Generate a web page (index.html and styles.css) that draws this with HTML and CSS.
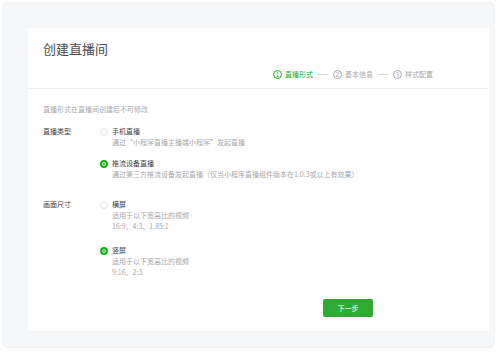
FILE: index.html
```html
<!DOCTYPE html>
<html lang="zh">
<head>
<meta charset="utf-8">
<link rel="stylesheet" href="styles.css">
</head>
<body>
<div class="frame">
  <div class="card">
    <div class="head">
      <div class="title">创建直播间</div>
      <div class="steps">
        <div class="step active"><span class="num">1</span><span>直播形式</span></div>
        <span class="sep"></span>
        <div class="step"><span class="num">2</span><span>基本信息</span></div>
        <span class="sep"></span>
        <div class="step"><span class="num">3</span><span>样式配置</span></div>
      </div>
    </div>
    <div class="body">
      <div class="note">直播形式在直播间创建后不可修改</div>
      <div class="row row-type">
        <div class="label">直播类型</div>
        <div class="options">
          <div class="option">
            <span class="radio"></span>
            <div class="opt-text">
              <div class="opt-title">手机直播</div>
              <div class="opt-desc">通过“小程序直播主播端小程序”发起直播</div>
            </div>
          </div>
          <div class="option">
            <span class="radio checked"></span>
            <div class="opt-text">
              <div class="opt-title">推流设备直播</div>
              <div class="opt-desc">通过第三方推流设备发起直播（仅当小程序直播组件版本在1.0.3或以上有效果）</div>
            </div>
          </div>
        </div>
      </div>
      <div class="row row-size">
        <div class="label">画面尺寸</div>
        <div class="options">
          <div class="option">
            <span class="radio"></span>
            <div class="opt-text">
              <div class="opt-title">横屏</div>
              <div class="opt-desc">适用于以下宽高比的视频</div>
              <div class="opt-desc">16:9、4:3、1.85:1</div>
            </div>
          </div>
          <div class="option option-gap">
            <span class="radio checked"></span>
            <div class="opt-text">
              <div class="opt-title">竖屏</div>
              <div class="opt-desc">适用于以下宽高比的视频</div>
              <div class="opt-desc">9:16、2:3</div>
            </div>
          </div>
        </div>
      </div>
      <div class="actions">
        <button class="btn">下一步</button>
      </div>
    </div>
  </div>
</div>
</body>
</html>
```

FILE: styles.css
```css
html, body {
  margin: 0;
  padding: 0;
  background: #ffffff;
}
body {
  font-family: "Noto Sans CJK SC", "Noto Sans", sans-serif;
  color: #404040;
}
.frame {
  margin: 3px;
  width: 491px;
  height: 344px;
  box-sizing: border-box;
  background: #f6f7f9;
  border-radius: 5px;
  box-shadow: 0 0 2px rgba(0, 0, 0, 0.18);
  padding: 25px 5px 16px 25px;
}
.card {
  background: #ffffff;
  height: 100%;
  display: flex;
  flex-direction: column;
}
.head {
  height: 61px;
  box-sizing: border-box;
  border-bottom: 1px solid #efefef;
  padding: 12px 56px 0 15px;
}
.title {
  font-size: 13px;
  line-height: 18px;
  color: #4a4a4a;
}
.steps {
  margin-top: 11px;
  display: flex;
  justify-content: flex-end;
  align-items: center;
  height: 10px;
  font-size: 7px;
  line-height: 10px;
  color: #a8a8a8;
}
.step {
  display: flex;
  align-items: center;
  gap: 2px;
}
.num {
  width: 7px;
  height: 7px;
  border: 1px solid currentColor;
  border-radius: 50%;
  font-size: 6px;
  line-height: 7px;
  text-align: center;
  margin-right: 1px;
}
.step.active {
  color: #1aad19;
}
.sep {
  width: 10px;
  height: 1px;
  background: #d8d8d8;
  margin: 0 5px;
}
.body {
  padding: 15px 0 0 15px;
  font-size: 7px;
  line-height: 11px;
}
.note {
  line-height: 10px;
  color: #a8a8a8;
}
.row {
  display: flex;
}
.row-type {
  margin-top: 12px;
}
.row-size {
  margin-top: 19px;
}
.label {
  width: 57px;
  flex: none;
  color: #444444;
}
.options {
  display: flex;
  flex-direction: column;
  gap: 10px;
}
.option-gap {
  margin-top: 3px;
}
.option {
  display: flex;
  align-items: flex-start;
  gap: 4px;
}
.radio {
  width: 8px;
  height: 8px;
  box-sizing: border-box;
  border: 1px solid #e0e0e0;
  border-radius: 50%;
  margin-top: 1.5px;
  flex: none;
  background: #fff;
}
.radio.checked {
  border: 2px solid #1aad19;
  background: #1aad19;
  box-shadow: inset 0 0 0 1px #fff;
}
.opt-title {
  color: #444444;
}
.opt-desc {
  color: #a8a8a8;
}
.actions {
  margin-top: 21px;
  padding-left: 280px;
}
.btn {
  width: 50px;
  height: 18px;
  border: none;
  border-radius: 2px;
  background: #2faa33;
  color: #ffffff;
  font-family: "Noto Sans CJK SC", sans-serif;
  font-size: 7px;
  padding: 0;
  display: block;
}
```
